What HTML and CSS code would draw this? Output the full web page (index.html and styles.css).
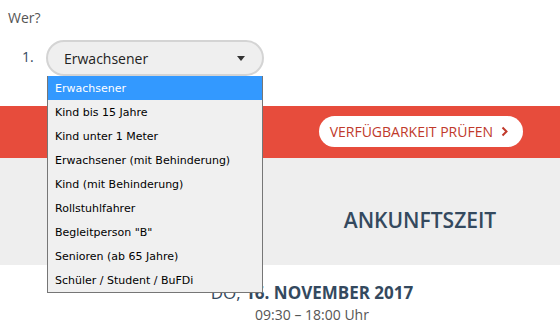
FILE: index.html
```html
<!DOCTYPE html>
<html lang="de">
<head>
  <meta charset="UTF-8">
  <title>Tickets buchen</title>
  <link rel="stylesheet" href="styles.css">
</head>
<body>
  <div class="personen">
    <p class="frage">Wer?</p>
    <ol class="liste">
      <li class="person">
        <span class="nummer">1.</span>
        <div class="auswahl">
          <span class="auswahl-text">Erwachsener</span>
          <svg class="pfeil" width="8" height="5" viewBox="0 0 8 5"><path d="M0 0h8L4 5z" fill="#333"/></svg>
          <ul class="optionen">
            <li class="option aktiv">Erwachsener</li>
            <li class="option">Kind bis 15 Jahre</li>
            <li class="option">Kind unter 1 Meter</li>
            <li class="option">Erwachsener (mit Behinderung)</li>
            <li class="option">Kind (mit Behinderung)</li>
            <li class="option">Rollstuhlfahrer</li>
            <li class="option">Begleitperson "B"</li>
            <li class="option">Senioren (ab 65 Jahre)</li>
            <li class="option">Schüler / Student / BuFDi</li>
          </ul>
        </div>
      </li>
    </ol>
  </div>

  <div class="band-rot">
    <a class="pruefen" href="#">
      VERFÜGBARKEIT PRÜFEN
      <svg width="8" height="11" viewBox="0 0 8 11"><path d="M1.5 1.5l4 4-4 4" fill="none" stroke="#c0392b" stroke-width="2"/></svg>
    </a>
  </div>

  <div class="band-grau">
    <div></div>
    <h2 class="titel">ANKUNFTSZEIT</h2>
  </div>

  <div class="termin">
    <div class="datum">DO, <strong>16. NOVEMBER 2017</strong></div>
    <div class="zeit">09:30 – 18:00 Uhr</div>
  </div>
</body>
</html>
```

FILE: styles.css
```css
body {
  margin: 0;
  font-family: "Open Sans", sans-serif;
  font-size: 14px;
  color: #555;
  background-color: #fff;
}

.personen {
  padding: 8px 8px 0;
}

.frage {
  margin: 0;
  line-height: 20px;
  color: #555;
}

.liste {
  list-style: none;
  margin: 12px 0 0;
  padding: 0;
}

.person {
  display: flex;
  align-items: center;
}

.nummer {
  width: 38px;
  padding-left: 14px;
  box-sizing: border-box;
  color: #34495e;
  line-height: 20px;
  margin-top: -2px;
}

.auswahl {
  position: relative;
  display: flex;
  align-items: center;
  justify-content: space-between;
  width: 218px;
  height: 36px;
  box-sizing: border-box;
  padding: 0 17px 0 16px;
  border: 2px solid #d4d4d4;
  border-radius: 18px;
  background-color: #efefef;
  color: #222;
}

.optionen {
  position: absolute;
  top: 34px;
  left: -1px;
  width: 216px;
  margin: 0;
  padding: 0;
  list-style: none;
  box-sizing: border-box;
  border: 1px solid #767676;
  border-top: none;
  background-color: #f0f0f0;
  z-index: 2;
}

.option {
  height: 24px;
  padding: 1px 0 0 7px;
  box-sizing: border-box;
  font-family: "DejaVu Sans", sans-serif;
  font-size: 11px;
  line-height: 24px;
  color: #000;
}

.option.aktiv {
  background-color: #3399ff;
  color: #fff;
}

.band-rot {
  display: flex;
  justify-content: flex-end;
  align-items: center;
  height: 52px;
  margin-top: 30px;
  padding-right: 37px;
  padding-bottom: 1px;
  box-sizing: border-box;
  background-color: #e74c3c;
}

.pruefen {
  display: flex;
  align-items: center;
  gap: 8px;
  height: 31px;
  padding: 0 14px 0 11px;
  border-radius: 16px;
  background-color: #fff;
  color: #c0392b;
  text-decoration: none;
  line-height: 31px;
}

.band-grau {
  display: grid;
  grid-template-columns: 1fr 1fr;
  align-items: center;
  height: 107px;
  background-color: #eee;
}

.titel {
  margin: 0;
  padding-top: 16px;
  text-align: center;
  font-size: 21px;
  font-weight: 600;
  color: #34495e;
}

.termin {
  padding: 16px 0 0 64px;
  text-align: center;
}

.datum {
  font-size: 17px;
  line-height: 24px;
  color: #34495e;
}

.datum strong {
  font-weight: 700;
}

.zeit {
  line-height: 20px;
  color: #555;
}
```
